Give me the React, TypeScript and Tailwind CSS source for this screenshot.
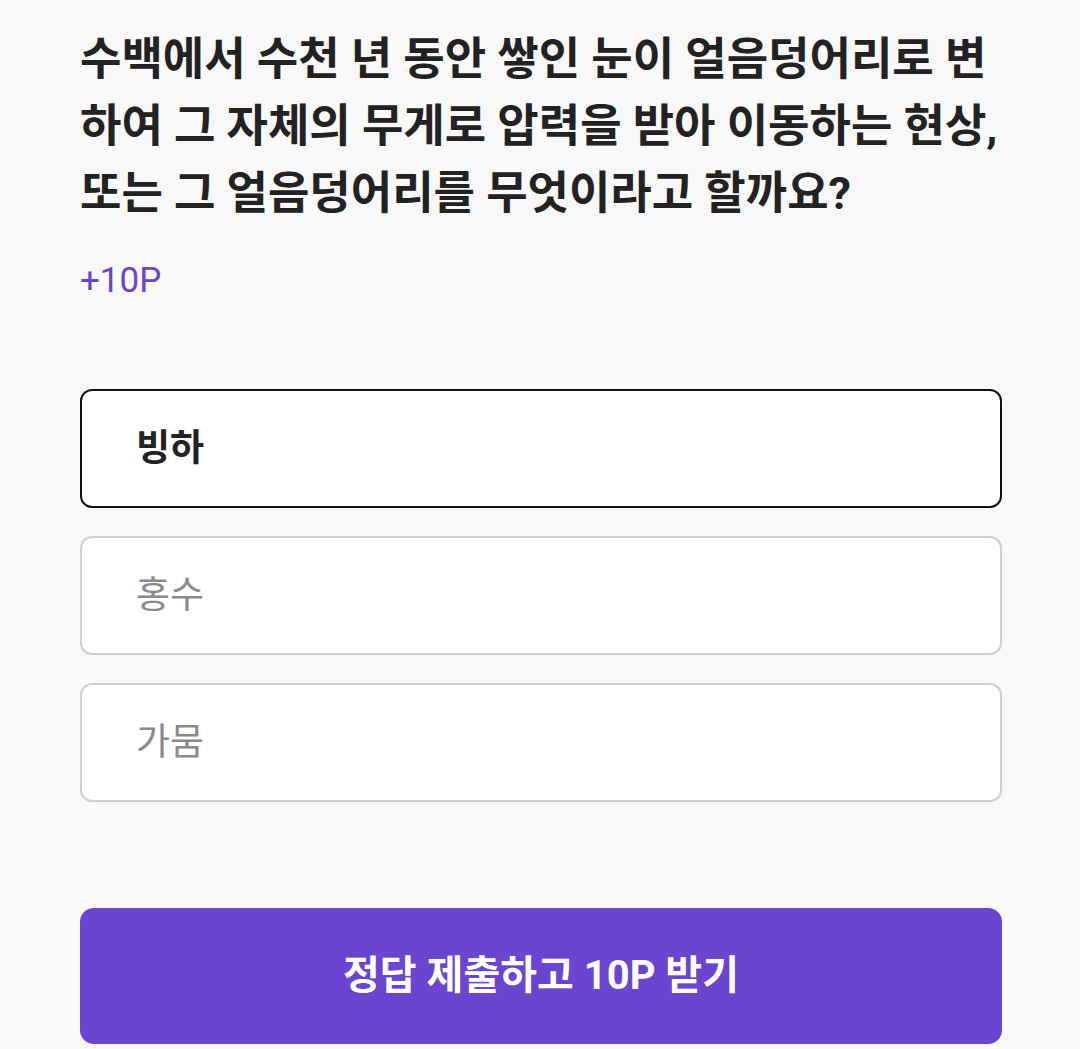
const options = [
  { label: "빙하", selected: true },
  { label: "홍수", selected: false },
  { label: "가뭄", selected: false },
];

function Option({ label, selected }: { label: string; selected: boolean }) {
  return (
    <div
      className={`h-[119px] rounded-[12px] bg-white flex items-center pl-[54px] border-2 ${
        selected ? "border-[#111111]" : "border-[#cfcfcf]"
      }`}
    >
      <span
        className={`text-[37px] ${selected ? "font-bold text-[#222222]" : "text-[#8a8a8a]"}`}
      >
        {label}
      </span>
    </div>
  );
}

export default function App() {
  return (
    <div
      className="min-h-[1049px] bg-[#f8f8f8] pl-[80px] pr-[78px] pt-[26px]"
      style={{ fontFamily: 'Roboto, "Noto Sans CJK KR", sans-serif' }}
    >
      <h1 className="text-[45px] font-bold leading-[67px] text-[#222222] whitespace-nowrap">
        수백에서 수천 년 동안 쌓인 눈이 얼음덩어리로 변<br />
        하여 그 자체의 무게로 압력을 받아 이동하는 현상,<br />
        또는 그 얼음덩어리를 무엇이라고 할까요?
      </h1>
      <p className="mt-[30px] text-[35px] leading-[48px] text-[#6b45c9]">+10P</p>

      <div className="mt-[84px] flex flex-col gap-[28px]">
        {options.map((o) => (
          <Option key={o.label} label={o.label} selected={o.selected} />
        ))}
      </div>

      <button className="mt-[106px] w-full h-[136px] rounded-[14px] bg-[#6b44d0] text-white text-[40px] font-bold">
        정답 제출하고 10P 받기
      </button>
    </div>
  );
}
